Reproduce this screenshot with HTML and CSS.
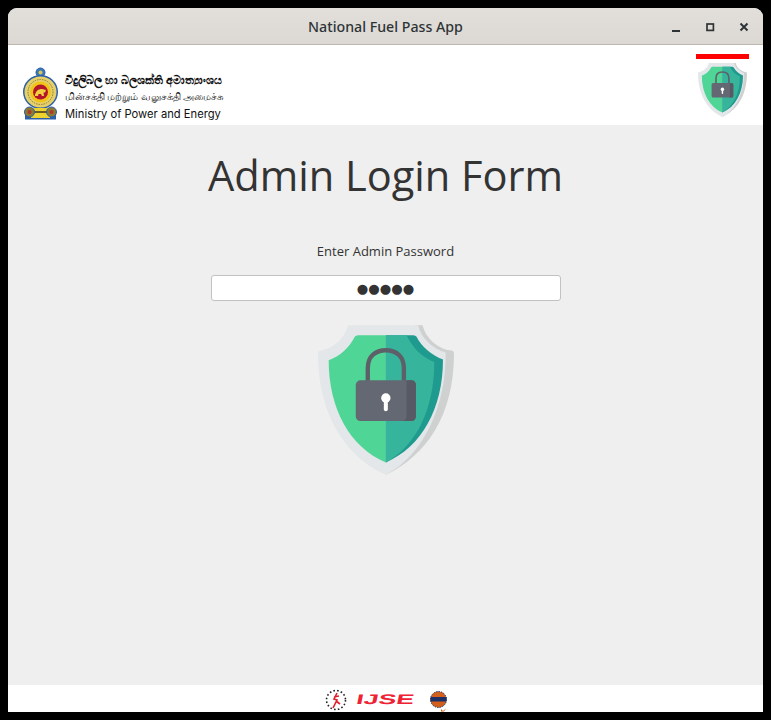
FILE: index.html
```html
<!DOCTYPE html>
<html lang="en">
<head>
<meta charset="utf-8">
<title>National Fuel Pass App</title>
<link rel="stylesheet" href="styles.css">
</head>
<body>
<svg class="defs" width="0" height="0" aria-hidden="true">
  <symbol id="shield" viewBox="55 30 407 448">
    <path fill="#cfd0d0" d="M345 30H368C378 70 415 102 455 106Q462 107 462 115C462 300 380 420 258 478Z"/>
    <path fill="#e3e7e9" d="M145 30H355C362 65 395 100 437 112C440 270 370 420 258 478C130 420 55 290 55 115Q55 107 62 106C100 100 135 70 145 30Z"/>
    <path fill="#4fd596" d="M175 60H258V441C150 395 87 280 87 135C120 125 150 95 165 65Q168 60 175 60Z"/>
    <path fill="#1f9a8e" d="M258 60H340Q347 60 350 65C365 95 395 120 429 133C429 280 365 395 258 441Z"/>
    <path fill="#36b59c" d="M258 60H320C340 100 365 125 403 140C403 280 350 390 258 441Z"/>
    <path fill="none" stroke="#5d6069" stroke-width="13" d="M204 200V158C204 122 228 105 258 105S312 122 312 158V200"/>
    <rect x="168" y="195" width="180" height="122" rx="14" fill="#646873"/>
    <path fill="#575a65" d="M320 195H334Q348 195 348 209V303Q348 317 334 317H306Q320 317 320 303Z"/>
    <circle cx="258" cy="248" r="14" fill="#fff"/>
    <rect x="252" y="250" width="12" height="38" rx="6" fill="#fff"/>
  </symbol>
</svg>
<div class="window">
  <div class="titlebar">
    <span class="title">National Fuel Pass App</span>
    <div class="controls">
      <svg class="ctl" viewBox="0 0 10 10"><rect x="1" y="8" width="8" height="2" fill="#2e3436"/></svg>
      <svg class="ctl" viewBox="0 0 10 10"><rect x="2" y="2" width="6.4" height="6.4" fill="none" stroke="#2e3436" stroke-width="1.7"/></svg>
      <svg class="ctl" viewBox="0 0 10 10"><path d="M1.500 1.500L8.500 8.500M8.500 1.500L1.500 8.500" stroke="#2e3436" stroke-width="2" fill="none"/></svg>
    </div>
  </div>
  <header class="head">
    <div class="brand">
      <svg class="emblem" viewBox="0 0 37 53">
        <circle cx="18.500" cy="5.500" r="4.500" fill="#3a78b5" stroke="#2c5fa6"/>
        <circle cx="18.500" cy="5.500" r="2" fill="#d8c65a"/>
        <ellipse cx="18.500" cy="25" rx="17.500" ry="17" fill="#2c5fa6"/>
        <ellipse cx="18.500" cy="25" rx="16" ry="15.500" fill="#e6d06a"/>
        <circle cx="18.500" cy="25" r="12.500" fill="none" stroke="#8a7a3a" stroke-width="1" stroke-dasharray="1.500 1"/>
        <circle cx="18.500" cy="25" r="10.500" fill="#f0c419"/>
        <circle cx="18.500" cy="25" r="7.500" fill="#b3162a"/>
        <path d="M13 28C14 24 16 22 20 22L24 23L23 25.500H21.500L22 29H20L19 27H16.500L16 29H13Z" fill="#f0d040"/>
        <rect x="3" y="47" width="31" height="5.500" fill="#2c5fa6"/>
        <rect x="9" y="41" width="19" height="10" fill="#eed22e"/>
        <rect x="11" y="44" width="15" height="2" fill="#6b5a1e"/>
        <circle cx="7.500" cy="45" r="5" fill="#8a7a32" stroke="#2c5fa6"/>
        <circle cx="7.500" cy="45" r="2" fill="#b3362a"/>
        <circle cx="29.500" cy="45" r="5" fill="#8a7a32" stroke="#2c5fa6"/>
        <circle cx="29.500" cy="45" r="2" fill="#b3362a"/>
      </svg>
      <div class="ministry">
        <div class="si">විදුලිබල හා බලශක්ති අමාත්‍යාංශය</div>
        <div class="ta">மின்சக்தி மற்றும் வலுசக்தி அமைச்சு</div>
        <div class="en">Ministry of Power and Energy</div>
      </div>
    </div>
    <div class="status">
      <div class="redbar"></div>
      <svg class="shield-small"><use href="#shield"/></svg>
    </div>
  </header>
  <main class="main">
    <h1 class="heading">Admin Login Form</h1>
    <label class="label" for="pw">Enter Admin Password</label>
    <input class="pw" id="pw" type="text" value="●●●●●">
    <svg class="shield-big"><use href="#shield"/></svg>
  </main>
  <footer class="foot">
    <svg class="logo-a" viewBox="0 0 22 22">
      <circle cx="11" cy="11" r="9.500" fill="#fff" stroke="#222" stroke-width="1.600" stroke-dasharray="1.600 2.200"/>
      <path d="M12 4L9 10L12 11L8 19M9 8L14 7M11 12L15 15" stroke="#e0202a" stroke-width="1.600" fill="none"/>
    </svg>
    <span class="ijse-box"><span class="ijse">IJSE</span></span>
    <svg class="logo-c" viewBox="0 0 17 21">
      <circle cx="8.500" cy="8.500" r="8" fill="#d2601c" stroke="#1f3a6e" stroke-dasharray="1.500 1"/>
      <rect x="0.500" y="6" width="16" height="4.500" fill="#1c2f66"/>
      <path d="M11 18L13 20L16 17.500L14 20.500H11Z" fill="#d2601c"/>
    </svg>
  </footer>
</div>
</body>
</html>
```
FILE: styles.css
```css
* { box-sizing: border-box; }
html, body { margin: 0; height: 100%; background: #000; }
body { padding: 8px; font-family: "Open Sans", sans-serif; color: #333; }
.defs { position: absolute; }
.window { width: 755px; height: 704px; display: flex; flex-direction: column; border-radius: 9px 9px 0 0; overflow: hidden; background: #efefef; }
.titlebar { height: 37px; flex: none; background: linear-gradient(#e2dfdb, #dcd9d4); border-bottom: 1px solid #bfb8b0; display: flex; align-items: center; justify-content: center; position: relative; }
.title { font-family: "Noto Sans", sans-serif; font-weight: 500; font-size: 14.200px; color: #2e3436; }
.controls { position: absolute; right: 14px; top: 14px; display: flex; gap: 24px; }
.ctl { width: 10px; height: 10px; display: block; }
.head { height: 80px; flex: none; background: #fff; display: flex; justify-content: space-between; padding: 9px 14px 0 14px; }
.brand { display: flex; align-items: flex-start; gap: 6px; padding-top: 13px; }
.emblem { width: 37px; height: 53px; display: block; }
.ministry { display: flex; flex-direction: column; color: #111; padding-top: 4px; }
.si { font-size: 11.200px; line-height: 17px; font-weight: 700; white-space: nowrap; font-family: "Noto Sans", sans-serif; }
.ta { font-size: 9.500px; line-height: 17px; white-space: nowrap; font-family: "Noto Sans", sans-serif; }
.en { font-family: Inter, sans-serif; font-size: 11.200px; line-height: 18px; white-space: nowrap; }
.status { display: flex; flex-direction: column; align-items: center; width: 53px; }
.redbar { width: 53px; height: 5px; background: #f00; flex: none; }
.shield-small { width: 49px; height: 54px; margin-top: 4px; }
.main { flex: 1; display: flex; flex-direction: column; align-items: center; background: #efefef; }
.heading { margin: 22px 0 0; font-weight: 400; font-size: 41.600px; line-height: 57px; color: #333; }
.label { margin-top: 37px; font-size: 13px; line-height: 20px; color: #333; }
.pw { margin-top: 14px; width: 350px; height: 26px; border: 1px solid #c2c2c2; border-radius: 3px; background: #fff; text-align: center; font-family: "DejaVu Sans", sans-serif; font-size: 13.200px; color: #333; padding: 0; outline: none; }
.shield-big { width: 136px; height: 150px; margin-top: 24px; }
.foot { height: 27px; flex: none; background: #fff; display: flex; justify-content: center; align-items: flex-start; padding-top: 4px; }
.logo-a { width: 22px; height: 22px; }
.ijse-box { margin-left: 11px; width: 59px; display: block; padding-top: 3px; }
.ijse { display: block; width: 30px; transform: scaleX(1.900) skewX(-6deg); transform-origin: 0 0; font-family: "Liberation Sans", sans-serif; font-weight: 700; font-size: 14px; line-height: 14px; color: #ee2233; }
.logo-c { margin-left: 13px; width: 17px; height: 21px; margin-top: 2px; }
```
